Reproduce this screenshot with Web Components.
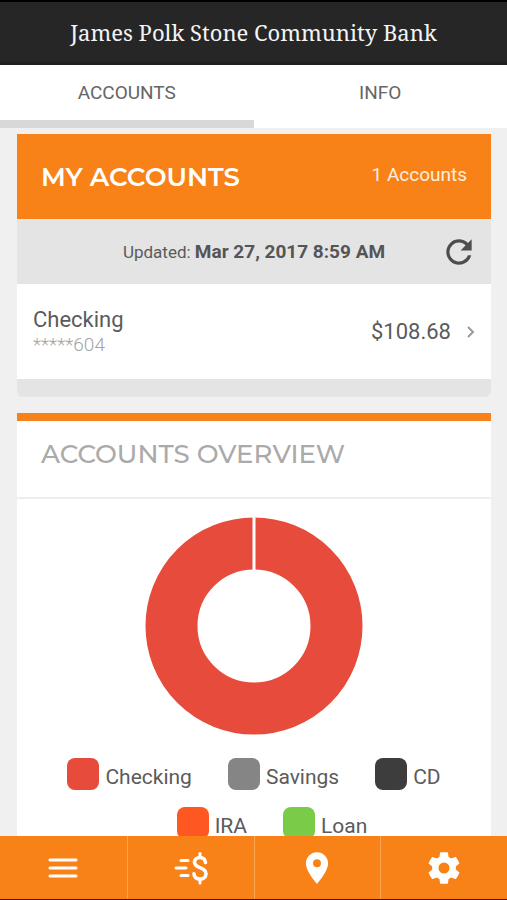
<!DOCTYPE html>
<html lang="en">
<head>
<meta charset="utf-8">
<meta name="viewport" content="width=device-width, initial-scale=1">
<title>James Polk Stone Community Bank</title>
<style>
  :root {
    --brand: #f98218;
    --ink: #5b5b5b;
    --panel: #e4e4e4;
    --page: #f0f0f0;
  }
  body { margin: 0; font-family: Roboto, "Liberation Sans", sans-serif; color: var(--ink); background: var(--page); }
</style>
</head>
<body>
<bank-app></bank-app>

<script>
function define(name, html) {
  const template = document.createElement('template');
  template.innerHTML = html;
  customElements.define(name, class extends HTMLElement {
    constructor() {
      super();
      this.attachShadow({ mode: 'open' }).append(template.content.cloneNode(true));
    }
  });
}

define('bank-header', `
  <style>
    :host { display: flex; align-items: center; justify-content: center; height: 60px;
      border-top: 2px solid #000; border-bottom: 3px solid #202020; background: #262626; color: #f4f4f4; }
    h1 { margin: 0; font: 400 22px/32px "Noto Serif", "Liberation Serif", serif; white-space: nowrap; }
  </style>
  <h1><slot></slot></h1>`);

define('bank-tabs', `
  <style>
    :host { display: grid; grid-template-columns: 1fr 1fr; background: #fff; }
    button { height: 63px; padding: 1px 0 0; border: 0; border-bottom: 8px solid transparent; background: none;
      font: 400 19px/24px Roboto, sans-serif; color: #666; }
    button[aria-selected=true] { border-bottom-color: #d8d8d8; }
  </style>
  <button role="tab" aria-selected="true">ACCOUNTS</button>
  <button role="tab" aria-selected="false">INFO</button>`);

define('account-row', `
  <style>
    :host { display: block; }
    a { display: flex; align-items: center; height: 95px; padding: 0 14px 0 16px; background: #fff; color: inherit; text-decoration: none; }
    .name { flex: 1; display: flex; flex-direction: column; font-size: 22px; line-height: 26px; }
    .number { font-size: 19px; line-height: 24px; font-weight: 300; color: #a4a4a4; }
    .amount { font-size: 22px; line-height: 26px; margin-right: 14px; }
    svg { display: block; }
  </style>
  <a href="#account">
    <span class="name"><slot name="name"></slot><span class="number"><slot name="number"></slot></span></span>
    <span class="amount"><slot name="amount"></slot></span>
    <svg width="12" height="16" viewBox="0 0 12 16" fill="none" stroke="#999" stroke-width="2"><path d="M3 3l5 5-5 5"/></svg>
  </a>`);

define('accounts-card', `
  <style>
    :host { display: block; overflow: hidden; border-radius: 0 0 6px 6px; background: var(--panel); }
    header { display: flex; align-items: center; justify-content: space-between; height: 86px; padding: 0 24px; box-sizing: border-box;
      background: var(--brand); color: #fff; border-bottom: 1px solid #f4e4d4; }
    h2 { margin: 0; font: 600 26px/32px Montserrat, Inter, sans-serif; }
    .count { font-size: 19px; line-height: 24px; padding-bottom: 4px; color: #ffeedd; }
    .updated { display: grid; grid-template-columns: 48px 1fr 48px; align-items: center; height: 64px; padding: 0 8px; text-align: center; font-size: 17px; line-height: 24px; }
    .updated p { grid-column: 2; margin: 0; white-space: nowrap; }
    strong { font-size: 19px; font-weight: 700; color: #555; }
    button { display: grid; place-items: center; width: 48px; height: 48px; padding: 0; border: 0; background: none; color: #4d4d4d; }
    .foot { height: 18px; }
  </style>
  <header><h2>MY ACCOUNTS</h2><span class="count">1 Accounts</span></header>
  <div class="updated">
    <p>Updated: <strong>Mar 27, 2017 8:59 AM</strong></p>
    <button aria-label="Refresh"><svg width="38" height="38" viewBox="0 0 24 24" fill="currentColor"><path d="M17.65 6.35A7.96 7.96 0 0 0 12 4a8 8 0 1 0 7.73 10h-2.08A6 6 0 1 1 12 6c1.66 0 3.14.69 4.22 1.78L13 11h7V4z"/></svg></button>
  </div>
  <account-row><span slot="name">Checking</span><span slot="number">*****604</span><span slot="amount">$108.68</span></account-row>
  <div class="foot"></div>`);

define('legend-item', `
  <style>
    :host { display: flex; gap: 6px; font-size: 21px; line-height: 24px; }
    i { width: 32px; height: 32px; border-radius: 8px; background: var(--swatch); }
    span { padding-top: 7px; }
  </style>
  <i></i><span><slot></slot></span>`);

define('overview-card', `
  <style>
    :host { display: block; background: #fff; border-top: 8px solid var(--brand); }
    h2 { margin: 0; height: 78px; padding: 17px 24px 0; box-sizing: border-box; font: 500 26px/32px Montserrat, Inter, sans-serif;
      color: #aaa; border-bottom: 2px solid #eee; }
    svg { display: block; margin: 18px auto 23px; }
    .row { display: flex; justify-content: center; gap: 36px; margin-bottom: 17px; }
    .indent { padding-left: 36px; }
  </style>
  <h2>ACCOUNTS OVERVIEW</h2>
  <svg width="218" height="218" viewBox="0 0 218 218" role="img" aria-label="Checking 100%">
    <circle cx="109" cy="109" r="82.5" fill="none" stroke="#e64b3b" stroke-width="52"/>
    <path d="M109 0v54" stroke="#fff" stroke-width="3"/>
  </svg>
  <div class="row">
    <legend-item style="--swatch:#e64b3b">Checking</legend-item>
    <legend-item style="--swatch:#858585">Savings</legend-item>
    <legend-item style="--swatch:#3d3d3d">CD</legend-item>
  </div>
  <div class="row indent">
    <legend-item style="--swatch:#ff5722">IRA</legend-item>
    <legend-item style="--swatch:#7acb48">Loan</legend-item>
  </div>`);

define('bank-nav', `
  <style>
    :host { display: grid; grid-template-columns: repeat(4, 1fr); height: 63px; background: var(--brand); border-bottom: 1px solid #3a1c08; }
    a { display: grid; place-items: center; color: #fff; }
    a + a { border-left: 1px solid #fba550; }
    svg { display: block; }
  </style>
  <a href="#menu" aria-label="Menu"><svg width="30" height="22" viewBox="0 0 30 22" stroke="currentColor" stroke-width="3" stroke-linecap="round"><path d="M2 3h26M2 11h26M2 19h26"/></svg></a>
  <a href="#transfer" aria-label="Transfer money"><svg width="34" height="34" viewBox="0 0 34 34" fill="none" stroke="currentColor" stroke-width="3" stroke-linecap="round">
    <path d="M7 9.500h7M2 17h10M7 24.500h7M26 2.500v4M26 28v4"/><path stroke-width="3.600" d="M31.500 11.500C31 8 28.800 6.500 26 6.500c-3.300 0-5.500 1.900-5.500 4.700 0 3.200 2.500 4.300 5.500 5.400 3.600 1.300 6 2.700 6 6.100 0 3.200-2.500 5.300-6 5.300s-5.700-2-6-5.200"/></svg></a>
  <a href="#locations" aria-label="Locations"><svg width="38" height="38" viewBox="0 0 24 24" fill="currentColor"><path d="M12 2C8.130 2 5 5.130 5 9c0 5.250 7 13 7 13s7-7.750 7-13c0-3.870-3.130-7-7-7zm0 9.500a2.500 2.500 0 0 1 0-5 2.500 2.500 0 0 1 0 5z"/></svg></a>
  <a href="#settings" aria-label="Settings"><svg width="38" height="38" viewBox="0 0 24 24" fill="currentColor"><path d="M19.430 12.980c.04-.32.07-.64.07-.98s-.03-.66-.07-.98l2.110-1.650c.19-.15.24-.42.12-.64l-2-3.460c-.12-.22-.39-.3-.61-.22l-2.490 1c-.52-.4-1.080-.73-1.690-.98l-.38-2.650A.488.488 0 0 0 14 2h-4c-.25 0-.46.18-.49.42l-.38 2.650c-.61.25-1.170.59-1.690.98l-2.490-1c-.23-.09-.49 0-.61.22l-2 3.460c-.13.22-.07.49.12.64l2.110 1.650c-.04.32-.07.65-.07.98s.03.66.07.98l-2.110 1.650c-.19.15-.24.42-.12.64l2 3.460c.12.22.39.3.61.22l2.490-1c.52.4 1.080.73 1.690.98l.38 2.650c.03.24.24.42.49.42h4c.25 0 .46-.18.49-.42l.38-2.650c.61-.25 1.170-.59 1.690-.98l2.490 1c.23.09.49 0 .61-.22l2-3.460c.12-.22.07-.49-.12-.64l-2.110-1.650zM12 15.500a3.500 3.500 0 1 1 0-7 3.500 3.500 0 0 1 0 7z"/></svg></a>`);

define('bank-app', `
  <style>
    :host { display: flex; flex-direction: column; height: 100vh; }
    main { flex: 1; min-height: 0; overflow-y: auto; scrollbar-width: none; padding: 6px 16px 0 17px; }
    overview-card { margin-top: 16px; }
  </style>
  <bank-header>James Polk Stone Community Bank</bank-header>
  <bank-tabs role="tablist"></bank-tabs>
  <main><accounts-card></accounts-card><overview-card></overview-card></main>
  <bank-nav role="navigation"></bank-nav>`);
</script>
</body>
</html>
